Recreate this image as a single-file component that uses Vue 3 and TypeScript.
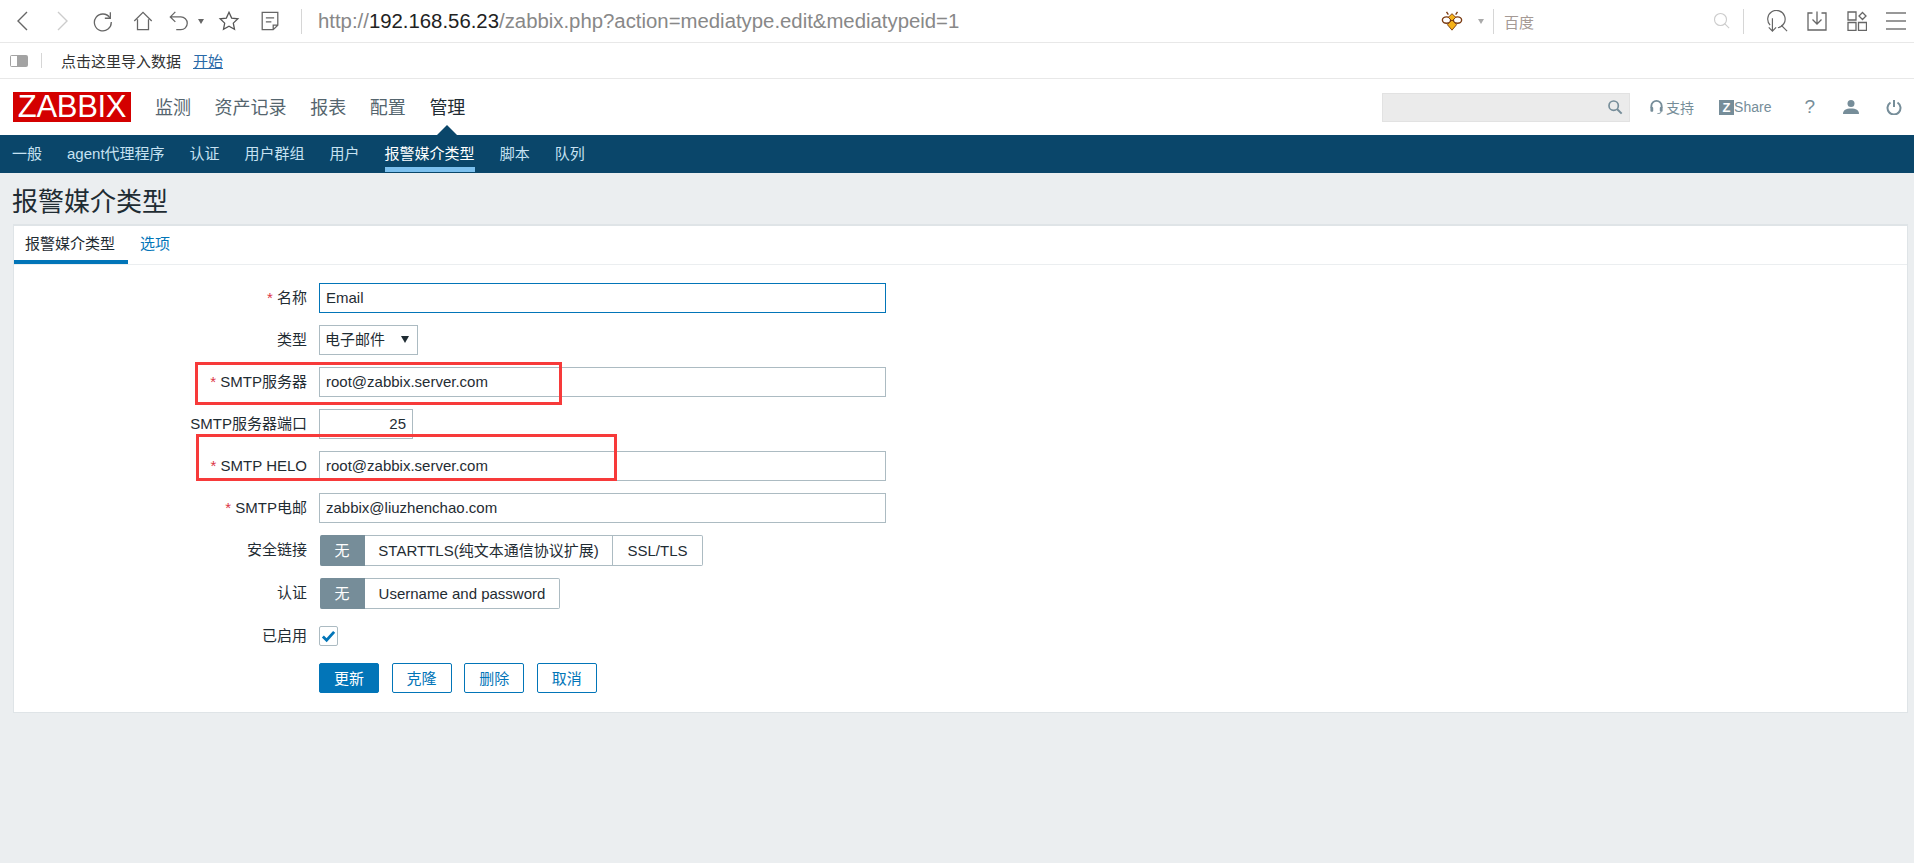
<script setup lang="ts">
const menu = ['监测', '资产记录', '报表', '配置', '管理']
const subnav = ['一般', 'agent代理程序', '认证', '用户群组', '用户', '报警媒介类型', '脚本', '队列']
</script>

<template>
  <div class="page">
    <div class="toolbar">
      <div class="tools">
        <svg class="ic back" viewBox="0 0 20 24"><path d="M15 3 6 12l9 9" fill="none" stroke="#666" stroke-width="1.400"/></svg>
        <svg class="ic back gap1" viewBox="0 0 20 24"><path d="M6 3l9 9-9 9" fill="none" stroke="#ccc" stroke-width="1.400"/></svg>
        <svg class="ic gap2" viewBox="0 0 24 24"><path d="M19.500 8.500A9.200 9.200 0 1 0 21 13" fill="none" stroke="#666" stroke-width="1.400"/><path d="M20 2.500v6.500h-6" fill="none" stroke="#666" stroke-width="1.400"/></svg>
        <svg class="ic gap3" viewBox="0 0 24 24"><path d="M2.500 12 12 2.500 21.500 12M6 10v11.500h12V10" fill="none" stroke="#666" stroke-width="1.400"/></svg>
        <svg class="ic gap4" viewBox="0 0 24 24"><path d="M8 2 2.500 7.500 8 13M3 7.500h11a7 7 0 0 1 0 14h-5" fill="none" stroke="#666" stroke-width="1.400"/></svg>
        <span class="caret dark"></span>
        <svg class="ic gap5" viewBox="0 0 24 24"><path d="m12 2.500 2.900 6.300 6.800.8-5 4.700 1.300 6.800-6-3.400-6 3.400 1.300-6.800-5-4.700 6.800-.8z" fill="none" stroke="#555" stroke-width="1.400"/></svg>
        <svg class="ic gap6" viewBox="0 0 24 24"><path d="M3.500 2.500h17v14l-5 5h-12zM7.500 8.500h9M7.500 13h6M20.500 16.500h-5v5" fill="none" stroke="#666" stroke-width="1.400"/></svg>
        <span class="vline url-sep"></span>
      </div>
      <div class="url"><span class="dim">http://</span>192.168.56.23<span class="dim">/zabbix.php?action=mediatype.edit&amp;mediatypeid=1</span></div>
      <div class="tools-right">
        <svg class="bee" viewBox="0 0 24 24">
          <path d="M8 5 6 2M16 5l2-3" stroke="#7a3b12" stroke-width="1.500" fill="none"/>
          <ellipse cx="6" cy="11" rx="4.500" ry="3.500" fill="#fff" stroke="#7a3b12" stroke-width="1.500"/>
          <ellipse cx="18" cy="11" rx="4.500" ry="3.500" fill="#fff" stroke="#7a3b12" stroke-width="1.500"/>
          <path d="M12 4l4 4-4 4-4-4zM12 11l5 5-5 6-5-6z" fill="#f5b21a" stroke="#7a3b12"/>
        </svg>
        <span class="caret light"></span>
        <span class="vline sep-a"></span>
        <span class="engine">百度</span>
        <svg class="search-ghost" viewBox="0 0 24 24"><circle cx="10" cy="10" r="8" fill="none" stroke="#ccc" stroke-width="1.500"/><path d="m15.500 15.500 6 6" stroke="#ccc" stroke-width="1.500"/></svg>
        <span class="vline sep-b"></span>
        <svg class="ic r1" viewBox="0 0 24 24"><path d="M4.500 16.500A9.500 9.500 0 1 1 13 19.300M16.500 16.500l6.500 6.500M7 9v14M3 19l4 4 4-4" fill="none" stroke="#666" stroke-width="1.300"/></svg>
        <svg class="ic r2" viewBox="0 0 20 20"><path d="M5.500 2H1v17h18V2h-4.500M10 .500V13M5.500 8.500 10 13l4.500-4.500" fill="none" stroke="#666" stroke-width="1.300"/></svg>
        <svg class="ic r3" viewBox="0 0 20 20"><path d="M1 1h8v8H1zM1 11.500h8v8H1zM11.500 11.500h8v8h-8zM15.500 1.500l3.500 3.500-3.500 3.500L12 5z" fill="none" stroke="#666" stroke-width="1.300"/></svg>
        <svg class="ic r4" viewBox="0 0 20 20"><path d="M0 2h20M0 10h20M0 18h20" fill="none" stroke="#777" stroke-width="1.300"/></svg>
      </div>
    </div>

    <div class="bookmarks">
      <span class="panel-ic"><i></i></span>
      <span class="vline bm-sep"></span>
      <span class="bm-text">点击这里导入数据</span>
      <a class="bm-link">开始</a>
    </div>

    <header class="topnav">
      <div class="logo">ZABBIX</div>
      <nav class="menu">
        <span v-for="(m, i) in menu" :key="m" :class="{ on: i === 4 }">{{ m }}</span>
      </nav>
      <div class="top-right">
        <div class="searchbox">
          <svg viewBox="0 0 24 24"><circle cx="10" cy="10" r="7" fill="none" stroke="#768d99" stroke-width="2.500"/><path d="m15 15 7 7" stroke="#768d99" stroke-width="3"/></svg>
        </div>
        <span class="link support">
          <svg viewBox="0 0 16 16"><path d="M2.500 9V7a5.500 5.500 0 0 1 11 0v2" fill="none" stroke="#768d99" stroke-width="2"/><rect x="1.500" y="8" width="3" height="5" rx="1" fill="#768d99"/><rect x="11.500" y="8" width="3" height="5" rx="1" fill="#768d99"/><path d="M13 13c0 1.500-2 2-4 2" fill="none" stroke="#768d99"/></svg>
          支持
        </span>
        <span class="link share"><b>Z</b>Share</span>
        <span class="q">?</span>
        <svg class="user" viewBox="0 0 16 16"><circle cx="8" cy="4.500" r="3.500" fill="#768d99"/><path d="M0 15c0-4 3-5.500 8-5.500s8 1.500 8 5.500z" fill="#768d99"/></svg>
        <svg class="power" viewBox="0 0 16 16"><path d="M4.500 3.500a6.500 6.500 0 1 0 7 0" fill="none" stroke="#768d99" stroke-width="2"/><path d="M8 1v7" stroke="#768d99" stroke-width="2"/></svg>
      </div>
    </header>

    <nav class="subnav">
      <span v-for="(s, i) in subnav" :key="s" :class="{ on: i === 5 }">{{ s }}</span>
    </nav>

    <main class="content">
      <h1>报警媒介类型</h1>
      <section class="panel">
        <div class="tabs">
          <span class="tab on">报警媒介类型</span>
          <span class="tab">选项</span>
        </div>
        <form class="form" @submit.prevent>
          <label><em>*</em> 名称</label>
          <div class="field"><div class="input wide focus">Email</div></div>

          <label>类型</label>
          <div class="field"><div class="input select">电子邮件<i class="arrow"></i></div></div>

          <label><em>*</em> SMTP服务器</label>
          <div class="field"><div class="input wide">root@zabbix.server.com</div></div>

          <label>SMTP服务器端口</label>
          <div class="field"><div class="input port">25</div></div>

          <label><em>*</em> SMTP HELO</label>
          <div class="field"><div class="input wide">root@zabbix.server.com</div></div>

          <label><em>*</em> SMTP电邮</label>
          <div class="field"><div class="input wide">zabbix@liuzhenchao.com</div></div>

          <label>安全链接</label>
          <div class="field seg">
            <span class="s on">无</span><span class="s st">STARTTLS(纯文本通信协议扩展)</span><span class="s ssl">SSL/TLS</span>
          </div>

          <label>认证</label>
          <div class="field seg">
            <span class="s on">无</span><span class="s up">Username and password</span>
          </div>

          <label>已启用</label>
          <div class="field check-row">
            <span class="check"><svg viewBox="0 0 16 16"><path d="M2 8l4 4 8-9" fill="none" stroke="#0275b8" stroke-width="3"/></svg></span>
          </div>

          <div class="buttons">
            <button class="btn primary">更新</button>
            <button class="btn">克隆</button>
            <button class="btn">删除</button>
            <button class="btn">取消</button>
          </div>
        </form>
        <div class="mark m1"></div>
        <div class="mark m2"></div>
      </section>
    </main>
  </div>
</template>

<style>
html, body { margin: 0; background: #ebeef0; }
</style>

<style scoped>
.page { min-height: 863px; background: #ebeef0; font-family: "Liberation Sans", "Noto Sans CJK SC", sans-serif; color: #1f2c33; }

.toolbar { height: 42px; background: #fff; border-bottom: 1px solid #e8e8e8; display: flex; align-items: center; position: relative; }
.tools { display: flex; align-items: center; padding-left: 12px; }
.ic { width: 22px; height: 22px; flex: none; display: block; }
.back { width: 20px; height: 24px; }
.gap1 { margin-left: 20px; }
.gap2 { margin-left: 20px; }
.gap3 { margin-left: 18px; }
.gap4 { margin-left: 14px; }
.gap5 { margin-left: 14px; }
.gap6 { margin-left: 19px; }
.caret { width: 0; height: 0; border-left: 3.500px solid transparent; border-right: 3.500px solid transparent; border-top: 5px solid #666; margin-left: 8px; }
.caret.light { border-top-color: #aaa; margin-left: 14.500px; }
.vline { width: 1px; height: 25px; background: #d6d6d6; flex: none; display: block; }
.url-sep { margin-left: 20px; }
.url { margin-left: 16px; font-size: 20.350px; color: #222; white-space: nowrap; flex: none; }
.dim { color: #888; }
.tools-right { margin-left: auto; display: flex; align-items: center; padding-right: 8px; }
.bee { width: 22px; height: 22px; }
.sep-a { margin-left: 9.500px; }
.engine { margin-left: 10px; font-size: 15px; color: #a59a95; width: 30px; }
.search-ghost { width: 18px; height: 18px; margin-left: 179px; }
.sep-b { margin-left: 12px; }
.r1 { margin-left: 22px; }
.r2 { margin-left: 19px; width: 20px; height: 20px; }
.r3 { margin-left: 20px; width: 20px; height: 20px; }
.r4 { margin-left: 19px; width: 20px; height: 20px; }

.bookmarks { height: 35px; background: #fff; border-bottom: 1px solid #e8e8e8; display: flex; align-items: center; padding-left: 10px; font-size: 15px; }
.panel-ic { width: 18px; height: 12px; background: #a3a3a3; border-radius: 2px; display: block; flex: none; }
.panel-ic i { display: block; width: 6px; height: 10px; margin: 1px 0 0 1px; background: #fff; }
.bm-sep { height: 15px; margin-left: 13px; }
.bm-text { margin-left: 19px; color: #333; }
.bm-link { margin-left: 12px; color: #2a6aa8; text-decoration: underline; }

.topnav { height: 56px; background: #fff; display: flex; align-items: center; position: relative; z-index: 1; }
.logo { margin-left: 13px; width: 118px; height: 30px; background: #d40000; color: #fff; font-size: 31px; line-height: 30px; text-align: center; letter-spacing: -0.300px; flex: none; }
.menu { display: flex; gap: 23.600px; margin: -2px 0 0 24px; font-size: 18px; color: #55656e; }
.menu .on { color: #1f2c33; position: relative; }
.menu .on::after { content: ""; position: absolute; left: 8px; bottom: -16px; border-left: 10px solid transparent; border-right: 10px solid transparent; border-bottom: 10px solid #0a466a; }
.top-right { margin-left: auto; display: flex; align-items: center; }
.searchbox { width: 248px; height: 29px; box-sizing: border-box; background: #ebebeb; border: 1px solid #e2e2e2; display: flex; justify-content: flex-end; align-items: center; padding-right: 6px; }
.searchbox svg { width: 16px; height: 16px; }
.link { font-size: 14px; color: #768d99; display: flex; align-items: center; }
.support { margin-left: 19px; gap: 2px; }
.support svg { width: 15px; height: 18px; }
.share { margin-left: 25px; }
.share b { display: block; width: 15px; height: 15px; background: #768d99; color: #fff; font-size: 13px; line-height: 15px; text-align: center; }
.q { margin-left: 33px; font-size: 19px; color: #768d99; font-weight: 400; }
.user { width: 16px; height: 16px; margin-left: 28px; }
.power { width: 16px; height: 16px; margin-left: 27px; margin-right: 12px; }

.subnav { height: 38px; background: #0a466a; display: flex; gap: 25px; padding: 0 12px; font-size: 15px; color: #c6e2f2; box-sizing: border-box; }
.subnav span { height: 37px; line-height: 38px; box-sizing: border-box; }
.subnav .on { color: #fff; border-bottom: 5px solid #7cc0ee; }

.content { padding: 0 6px 0 13px; }
h1 { margin: 0 0 0 -1px; height: 51px; font-size: 26px; font-weight: 400; line-height: 58px; color: #1f2c33; }
.panel { background: #fff; border: 1px solid #dfe4e7; border-top-width: 2px; position: relative; box-sizing: border-box; height: 489px; }
.tabs { height: 38px; border-bottom: 1px solid #ebeef0; display: flex; font-size: 15px; }
.tab { padding: 0 11px; line-height: 35px; color: #0275b8; box-sizing: border-box; height: 38px; }
.tab.on { color: #1f2c33; border-bottom: 4px solid #0275b8; width: 114px; padding-right: 0; margin-right: 1px; }
.form { display: grid; grid-template-columns: 293px 1fr; column-gap: 12px; row-gap: 12px; padding-top: 18px; }
label { text-align: right; font-size: 15px; line-height: 29px; white-space: nowrap; color: #1f2c33; }
label em { color: #dc3545; font-style: normal; }
.field { display: flex; height: 30px; }
.input { height: 30px; box-sizing: border-box; border: 1px solid #acbbc2; background: #fff; font-size: 15px; line-height: 28px; padding: 0 6px; color: #1f2c33; }
.wide { width: 567px; }
.focus { border-color: #0275b8; }
.select { width: 99px; position: relative; padding-left: 5px; }
.arrow { position: absolute; right: 8px; top: 10px; border-left: 4px solid transparent; border-right: 4px solid transparent; border-top: 7px solid #1f2c33; }
.port { width: 94px; text-align: right; }
.seg { height: 31px; margin-left: 1px; font-size: 15px; line-height: 29px; }
.seg .s { display: block; box-sizing: border-box; height: 31px; border: 1px solid #acbbc2; border-left: 0; text-align: center; color: #1f2c33; }
.seg .s:last-child { border-radius: 0 2px 2px 0; }
.seg .on { width: 45px; background: #768d99; border-color: #768d99; color: #fff; border-radius: 2px 0 0 2px; }
.st { width: 248px; }
.ssl { width: 90px; }
.up { width: 195px; }
.check-row { align-items: center; }
.check { width: 19px; height: 20px; box-sizing: border-box; border: 1px solid #acbbc2; border-radius: 2px; display: block; }
.check svg { width: 15px; height: 15px; display: block; margin: 2px 0 0 1px; }
.buttons { grid-column: 2; display: flex; gap: 12.600px; }
.btn { width: 60px; height: 30px; box-sizing: border-box; border: 1px solid #0275b8; background: #fff; color: #0275b8; font: inherit; font-size: 15px; border-radius: 2px; padding: 0 0 1px; }
.btn.primary { background: #0275b8; color: #fff; }
.mark { position: absolute; border: 3px solid #f73a3a; box-sizing: border-box; pointer-events: none; }
.m1 { left: 181px; top: 136px; width: 367px; height: 43px; }
.m2 { left: 182px; top: 208px; width: 421px; height: 47px; }
</style>
